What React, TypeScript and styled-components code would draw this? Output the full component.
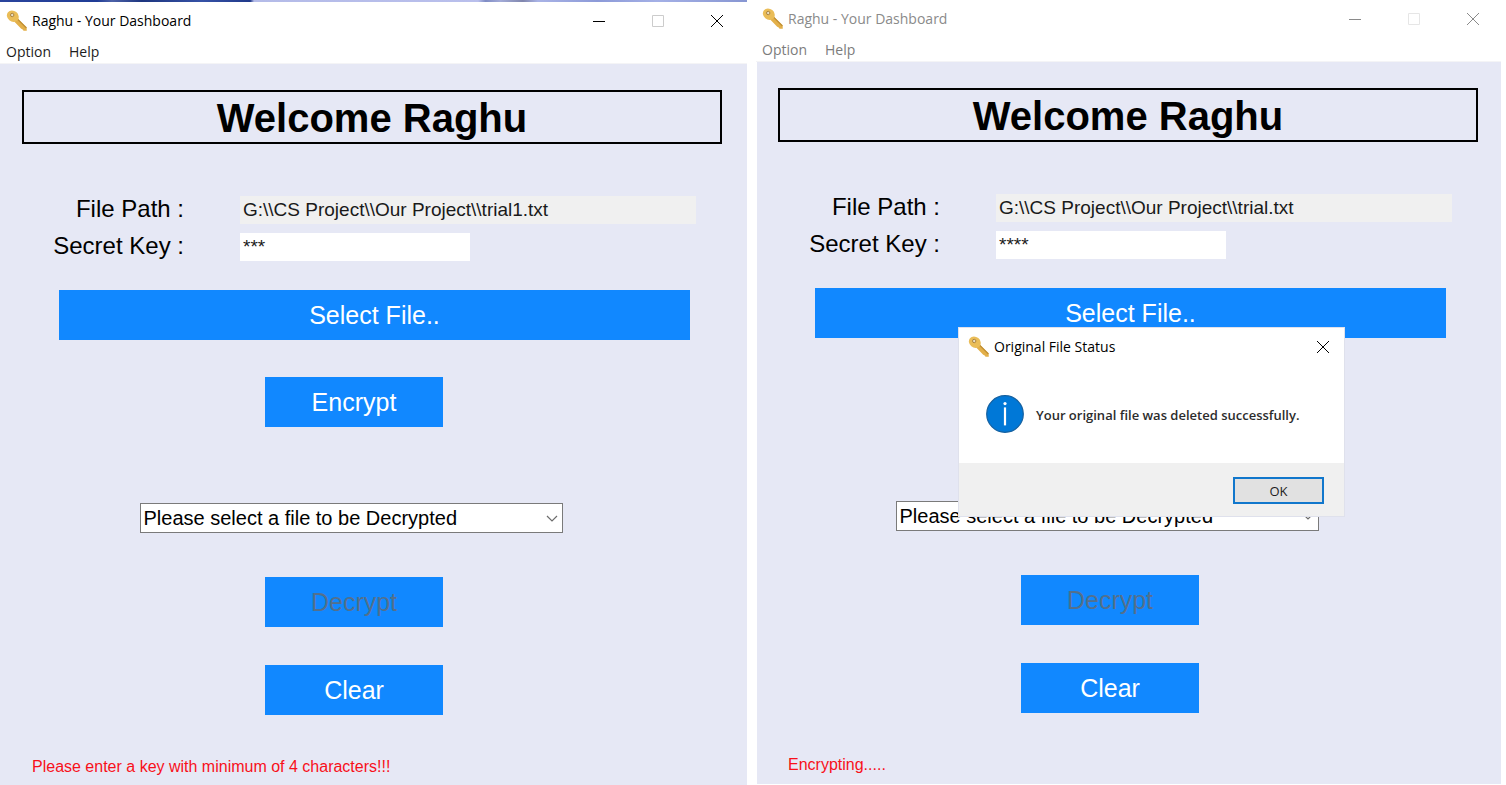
import React from "react";
import styled, { createGlobalStyle } from "styled-components";

const SANS = '"Liberation Sans", Arial, sans-serif';
const UI = '"Open Sans", "Noto Sans", sans-serif';

const GlobalStyle = createGlobalStyle`
  *, *::before, *::after { box-sizing: border-box; }
  body { margin: 0; background: #fff; font-family: ${SANS}; color: #000; }
  button, input, select { font: inherit; color: inherit; margin: 0; border-radius: 0; }
`;

const Desktop = styled.main`
  display: grid;
  grid-template-columns: 747fr 745fr;
  column-gap: 9px;
  padding-right: 5px;
  min-height: 100vh;
`;

const Column = styled.div`
  display: flex;
  flex-direction: column;
  min-width: 0;
`;

const Wallpaper = styled.div`
  height: 2px;
  background: linear-gradient(90deg, #2a449c 0%, #1f3c96 13%, #4d62a8 15%, #1d357f 19%, #3652a6 27%, #20398a 33.5%, #b4bbe8 34%, #b9bfec 64%, #7f8cc4 65%, #a3abd8 67%, #8086ad 70%, #a9b3e6 72%, #8c9ad8 80%, #a4b0e6 88%, #8796d2 100%);
`;

const Window = styled.section`
  position: relative;
  flex: 1;
  display: flex;
  flex-direction: column;
`;

const TitleBar = styled.header<{ $inactive?: boolean }>`
  display: flex;
  align-items: center;
  height: 37px;
  padding: 0 ${(p) => (p.$inactive ? "20px" : "22px")} 0 6px;
  background: #fff;
  font-family: ${UI};
  color: ${(p) => (p.$inactive ? "#8a8a8a" : "#000")};
`;

const Title = styled.h2`
  flex: 1;
  margin: 0 0 0 4px;
  font-size: 14px;
  line-height: 20px;
  font-weight: 400;
`;

const CaptionButtons = styled.div`
  display: flex;
  gap: 43px;
`;

const CaptionButton = styled.button`
  display: flex;
  width: 16px;
  height: 16px;
  padding: 0;
  border: 0;
  background: none;
`;

const MenuBar = styled.nav<{ $inactive?: boolean }>`
  display: flex;
  gap: 18px;
  height: 25px;
  padding-left: 6px;
  background: #fff;
  border-bottom: 1px solid #f4f4f6;
  font-family: ${UI};
  font-size: 14px;
  font-weight: 500;
  color: ${(p) => (p.$inactive ? "#7c7c7c" : "#1c1c1c")};
`;

const MenuItem = styled.button`
  padding: 0;
  border: 0;
  background: none;
  line-height: 26px;
`;

const Body = styled.div<{ $inactive?: boolean }>`
  flex: 1;
  padding: 26px 22px 0;
  background: #e6e8f5;
  box-shadow: ${(p) => (p.$inactive ? "inset 1px -1px 0 #fff" : "none")};
`;

const Content = styled.div`
  display: flex;
  flex-direction: column;
  max-width: 700px;
`;

const Heading = styled.h1`
  margin: 0;
  padding-top: 2px;
  border: 2px solid #000;
  text-align: center;
  font-size: 40px;
  line-height: 48px;
  font-weight: 700;
`;

const Fields = styled.div`
  display: grid;
  grid-template-columns: 162px 1fr;
  column-gap: 56px;
  row-gap: 9px;
  margin: 52px 26px 0 0;
`;

const Label = styled.label`
  text-align: right;
  font-size: 24px;
  line-height: 26px;
`;

const Entry = styled.input<{ $short?: boolean }>`
  width: ${(p) => (p.$short ? "230px" : "100%")};
  height: 28px;
  padding: 0 3px;
  border: 0;
  outline: 0;
  background: ${(p) => (p.$short ? "#fff" : "#f0f0f0")};
  && { font-size: 19px; color: #1a1a1a; }
`;

const ActionButton = styled.button<{ $covered?: boolean }>`
  width: 178px;
  height: 50px;
  padding: 0;
  border: 0;
  background: #1188ff;
  visibility: ${(p) => (p.$covered ? "hidden" : "visible")};
  && { font-size: 25px; color: #fff; }
  &&:disabled { color: #54708c; }
`;

const WideButton = styled(ActionButton)`
  width: auto;
  margin: 29px 32px 0 37px;
`;

const Actions = styled.div`
  display: flex;
  flex-direction: column;
  align-items: center;
  margin: 37px 36px 0 0;
`;

const Picker = styled.div`
  display: grid;
  width: 423px;
  max-width: 100%;
  margin: 76px 6px 44px 0;
  align-items: center;

  & > * { grid-area: 1 / 1; }
  & > svg { justify-self: end; margin-right: 4px; pointer-events: none; }
`;

const Select = styled.select`
  appearance: none;
  width: 100%;
  height: 30px;
  padding: 0 24px 0 3px;
  border: 1px solid #7a7a7a;
  background: #fff;
  outline: 0;
  && { font-size: 20px; }
`;

const LastAction = styled.div`
  margin-top: 38px;
`;

const Status = styled.p`
  margin: 43px 0 0 10px;
  font-size: 16px;
  line-height: 18px;
  color: #f8101a;
`;

const Dialog = styled.div`
  position: absolute;
  top: 328px;
  left: 203px;
  width: 385px;
  background: #fff;
  box-shadow: 0 0 0 1px #dfe1ec;
  font-family: ${UI};
`;

const DialogTitle = styled(TitleBar)`
  padding: 0 13px 0 9px;
`;

const Message = styled.div`
  display: flex;
  align-items: center;
  gap: 12px;
  height: 98px;
  padding: 0 0 0 27px;
  font-size: 13px;
  line-height: 18px;
  font-weight: 600;
  color: #2c2c2c;

  p { margin: 0; padding-top: 2px; white-space: nowrap; }
`;

const DialogFooter = styled.footer`
  display: flex;
  justify-content: flex-end;
  padding: 14px 20px 12px;
  background: #f0f0f0;
`;

const OkButton = styled.button`
  width: 91px;
  height: 27px;
  padding: 0;
  border: 2px solid #1177cc;
  background: #e1e1e1;
  && { font-size: 13px; font-weight: 500; color: #1c1c1c; }
`;

const KeyIcon = () => (
  <svg width="22" height="22" viewBox="0 0 22 22" aria-hidden="true">
    <path d="M10.8 7.8 20.6 17.2 20.8 20.8 17.6 20.8 16.4 19.2 15.2 18.8 8.2 11.4Z" fill="#e3b04a" />
    <path d="M11.4 9 20.4 18" stroke="#c08f34" strokeWidth="1.2" />
    <ellipse cx="6.8" cy="6.2" rx="6.3" ry="5.4" transform="rotate(40 6.8 6.2)" fill="#eabd58" />
    <circle cx="6.2" cy="5" r="1.7" fill="#e9dfc4" stroke="#ac8440" strokeWidth="1" />
  </svg>
);

const MinimizeIcon = () => (
  <svg width="16" height="16" viewBox="0 0 16 16" aria-hidden="true">
    <path d="M2 8.5H14" stroke="currentColor" />
  </svg>
);

const MaximizeIcon = ({ color }: { color: string }) => (
  <svg width="16" height="16" viewBox="0 0 16 16" aria-hidden="true">
    <path d="M2.5 2.5H13.5V13.5H2.5Z" fill="none" stroke={color} />
  </svg>
);

const CloseIcon = () => (
  <svg width="16" height="16" viewBox="0 0 16 16" aria-hidden="true">
    <path d="M2 2 14 14M14 2 2 14" stroke="currentColor" />
  </svg>
);

const ChevronIcon = () => (
  <svg width="14" height="10" viewBox="0 0 14 10" aria-hidden="true">
    <path d="M2 3 7 8 12 3" fill="none" stroke="#6c6c6c" strokeWidth="1.2" />
  </svg>
);

const InfoIcon = () => (
  <svg width="38" height="38" viewBox="0 0 38 38" aria-hidden="true">
    <circle cx="19" cy="19" r="18.3" fill="#0078d7" stroke="#15609f" strokeWidth="1.2" />
    <circle cx="19" cy="8.6" r="1.6" fill="#fff" />
    <path d="M19 12.4V30.4" stroke="#fff" strokeWidth="2.2" />
  </svg>
);

interface DashboardProps {
  id: string;
  path: string;
  secret: string;
  status: string;
  inactive?: boolean;
  children?: React.ReactNode;
}

function Dashboard({ id, path, secret, status, inactive, children }: DashboardProps) {
  return (
    <Window>
      <TitleBar $inactive={inactive}>
        <KeyIcon />
        <Title>Raghu - Your Dashboard</Title>
        <CaptionButtons>
          <CaptionButton aria-label="Minimize"><MinimizeIcon /></CaptionButton>
          <CaptionButton aria-label="Maximize"><MaximizeIcon color={inactive ? "#e6e6e6" : "#cccccc"} /></CaptionButton>
          <CaptionButton aria-label="Close"><CloseIcon /></CaptionButton>
        </CaptionButtons>
      </TitleBar>
      <MenuBar $inactive={inactive}>
        <MenuItem>Option</MenuItem>
        <MenuItem>Help</MenuItem>
      </MenuBar>
      <Body $inactive={inactive}>
        <Content>
          <Heading>Welcome Raghu</Heading>
          <Fields>
            <Label htmlFor={`${id}-path`}>File Path :</Label>
            <Entry id={`${id}-path`} readOnly value={path} />
            <Label htmlFor={`${id}-key`}>Secret Key :</Label>
            <Entry id={`${id}-key`} $short defaultValue={secret} />
          </Fields>
          <WideButton>Select File..</WideButton>
          <Actions>
            <ActionButton $covered={inactive}>Encrypt</ActionButton>
            <Picker>
              <Select aria-label="File to decrypt">
                <option>Please select a file to be Decrypted</option>
              </Select>
              <ChevronIcon />
            </Picker>
            <ActionButton disabled>Decrypt</ActionButton>
            <LastAction><ActionButton>Clear</ActionButton></LastAction>
          </Actions>
          <Status role="status">{status}</Status>
        </Content>
      </Body>
      {children}
    </Window>
  );
}

export default function App() {
  return (
    <>
      <GlobalStyle />
      <Desktop>
        <Column>
          <Wallpaper />
          <Dashboard
            id="first"
            path={"G:\\\\CS Project\\\\Our Project\\\\trial1.txt"}
            secret="***"
            status="Please enter a key with minimum of 4 characters!!!"
          />
        </Column>
        <Column>
          <Dashboard
            id="second"
            inactive
            path={"G:\\\\CS Project\\\\Our Project\\\\trial.txt"}
            secret="****"
            status="Encrypting....."
          >
            <Dialog role="dialog" aria-label="Original File Status">
              <DialogTitle>
                <KeyIcon />
                <Title>Original File Status</Title>
                <CaptionButton aria-label="Close"><CloseIcon /></CaptionButton>
              </DialogTitle>
              <Message>
                <InfoIcon />
                <p>Your original file was deleted successfully.</p>
              </Message>
              <DialogFooter>
                <OkButton>OK</OkButton>
              </DialogFooter>
            </Dialog>
          </Dashboard>
        </Column>
      </Desktop>
    </>
  );
}
